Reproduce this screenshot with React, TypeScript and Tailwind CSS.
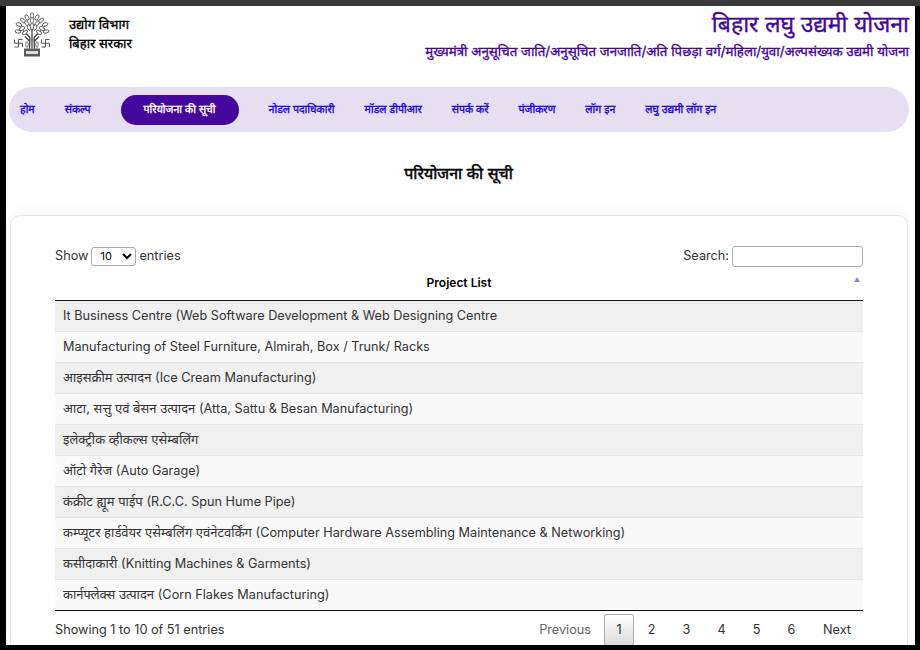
const font = "[font-family:Inter,'Noto_Sans','Noto_Sans_Devanagari',sans-serif]"
const heavy = "font-normal [-webkit-text-stroke:0.35px_currentColor]"

const navItems = [
  { label: "होम" },
  { label: "संकल्प" },
  { label: "परियोजना की सूची", active: true },
  { label: "नोडल पदाधिकारी" },
  { label: "मॉडल डीपीआर" },
  { label: "संपर्क करें" },
  { label: "पंजीकरण" },
  { label: "लॉग इन" },
  { label: "लघु उद्यमी लॉग इन" },
]

const projects = [
  { hi: "", en: "It Business Centre (Web Software Development & Web Designing Centre" },
  { hi: "", en: "Manufacturing of Steel Furniture, Almirah, Box / Trunk/ Racks" },
  { hi: "आइसक्रीम उत्पादन ", en: "(Ice Cream Manufacturing)" },
  { hi: "आटा, सत्तु एवं बेसन उत्पादन ", en: "(Atta, Sattu & Besan Manufacturing)" },
  { hi: "इलेक्ट्रीक व्हीकल्स एसेम्बलिंग", en: "" },
  { hi: "ऑटो गैरेज ", en: "(Auto Garage)" },
  { hi: "कंक्रीट ह्यूम पाईप ", en: "(R.C.C. Spun Hume Pipe)" },
  { hi: "कम्प्यूटर हार्डवेयर एसेम्बलिंग एवंनेटवर्किंग ", en: "(Computer Hardware Assembling Maintenance & Networking)" },
  { hi: "कसीदाकारी ", en: "(Knitting Machines & Garments)" },
  { hi: "कार्नफ्लेक्स उत्पादन ", en: "(Corn Flakes Manufacturing)" },
]

function Emblem() {
  const leaves = [
    [18, 3, 90], [13, 5, 60], [23, 5, 120], [9, 8, 40], [18, 8, 90], [27, 8, 140], [5, 12, 20], [13, 11, 50], [23, 11, 130], [31, 12, 160],
    [8, 16, 150], [15, 15, 70], [21, 15, 110], [28, 16, 30], [4, 19, 10], [11, 20, 140], [25, 20, 40], [32, 19, 170], [18, 14, 90],
  ]
  return (
    <svg viewBox="0 0 36 44" className="w-[36px] h-[45px] shrink-0">
      <path d="M18 36V10M15.500 36l.5-11-7-7M20.500 36l-.5-11 7-7M16 29l-5-5M20 29l5-5" stroke="#333" strokeWidth="1.200" fill="none" />
      {leaves.map(([x, y, r], i) => (
        <ellipse key={i} cx={x} cy={y} rx="3" ry="1.600" fill="#fff" stroke="#444" strokeWidth="0.800" transform={`rotate(${r} ${x} ${y})`} />
      ))}
      <ellipse cx="13" cy="32" rx="1.200" ry="3" fill="#fff" stroke="#444" strokeWidth="0.700" />
      <ellipse cx="23" cy="32" rx="1.200" ry="3" fill="#fff" stroke="#444" strokeWidth="0.700" />
      <g stroke="#555" strokeWidth="1" fill="none">
        <path d="M4.500 27v7.500M0.500 30.750h8M4.500 27h4M8.500 30.750v3.750M4.500 34.500h-4M0.500 30.750V27" />
        <path d="M31.500 27v7.500M27.500 30.750h8M31.500 27h4M35.500 30.750v3.750M31.500 34.500h-4M27.500 30.750V27" />
      </g>
      <rect x="10" y="36" width="16" height="8" fill="#5a5a5a" />
      <rect x="12" y="38.500" width="12" height="3" fill="#ddd" />
    </svg>
  )
}

export default function App() {
  return (
    <div className={`w-[920px] h-[650px] overflow-hidden bg-black flex flex-col ${font}`}>
      <div className="h-[6px] bg-[#3a3a3a] shrink-0" />
      <div className="flex-1 min-h-0 ml-[6px] mr-[5px] mb-[5px] bg-white overflow-hidden flex flex-col">
        <header className="h-[81px] shrink-0 flex justify-between pl-[8px] pr-[6px]">
          <div className="flex pt-[6px]">
            <Emblem />
            <div className={`ml-[19px] pt-[3px] text-[13px] leading-[19px] text-black ${heavy}`}>
              <div>उद्योग विभाग</div>
              <div>बिहार सरकार</div>
            </div>
          </div>
          <div className={`text-right text-[#44079c] pt-[1px] ${heavy}`}>
            <div className="text-[23px] leading-[35px]">बिहार लघु उद्यमी योजना</div>
            <div className="text-[13.300px] leading-[18px]">मुख्यमंत्री अनुसूचित जाति/अनुसूचित जनजाति/अति पिछड़ा वर्ग/महिला/युवा/अल्पसंख्यक उद्यमी योजना</div>
          </div>
        </header>

        <nav className="h-[45px] shrink-0 ml-[3px] mr-[6px] rounded-[23px] bg-[#e6dff1] flex items-center gap-[30px] pl-[11px]">
          {navItems.map((item) => (
            <div
              key={item.label}
              className={`shrink-0 text-[10.600px] whitespace-nowrap ${heavy} ${
                item.active
                  ? "h-[30px] px-[23px] rounded-[15px] bg-[#44079c] text-white flex items-center justify-center"
                  : "text-[#1a00e0]"
              }`}
            >
              {item.label}
            </div>
          ))}
        </nav>

        <div className="h-[83px] shrink-0 flex items-center justify-center pb-[2px] pr-[4px] text-[16px] text-black font-normal [-webkit-text-stroke:0.5px_currentColor]">
          परियोजना की सूची
        </div>

        <section className="flex-1 min-h-0 ml-[4px] mr-[7px] bg-white border border-[#e8e8e8] rounded-t-[10px] border-b-0 shadow-[0_-6px_14px_rgba(0,0,0,0.03)] pt-[29px] pl-[44px] pr-[44px] text-[#333] text-[13px]">
          <div className="flex justify-between h-[22px] text-[12.700px]">
            <div className="flex items-center gap-[3px]">
              <span>Show</span>
              <select className="w-[45px] h-[19px] border border-[#aaa] rounded-[3px] text-[11px] pl-[4px] bg-white text-black">
                <option>10</option>
              </select>
              <span>entries</span>
            </div>
            <div className="flex items-center gap-[3px]">
              <span>Search:</span>
              <input className="w-[131px] h-[21px] border border-[#aaa] rounded-[3px] bg-white" />
            </div>
          </div>

          <div className="h-[34px] relative flex items-center justify-center border-b border-[#111] font-semibold text-[12px] text-black pb-[2px]">
            Project List
            <span className="absolute right-[3px] top-[10px] w-0 h-0 border-x-[3.500px] border-x-transparent border-b-[5px] border-b-[#8888e8]" />
          </div>

          {projects.map((row, i) => (
            <div
              key={row.hi + row.en}
              className={`flex items-center px-[8px] whitespace-pre ${
                i === 0 ? "h-[30px]" : "h-[31px] border-t border-[#e4e4e4]"
              } ${i % 2 === 0 ? "bg-[#f0f0f0]" : "bg-[#f9f9f9]"}`}
            >
              {row.hi}
              <span className="text-[12.700px]">{row.en}</span>
            </div>
          ))}

          <div className="border-t border-[#111] flex justify-between text-[12.700px]">
            <div className="pt-[9px]">Showing 1 to 10 of 51 entries</div>
            <div className="flex items-start pt-[3px] text-[#333]">
              <span className="text-[#666] pt-[6px] mr-[13px]">Previous</span>
              <span className="w-[30px] h-[32px] border border-[#aaa] rounded-[2px] bg-gradient-to-b from-white to-[#dcdcdc] flex items-center justify-center">1</span>
              <span className="w-[35px] text-center pt-[6px]">2</span>
              <span className="w-[35px] text-center pt-[6px]">3</span>
              <span className="w-[35px] text-center pt-[6px]">4</span>
              <span className="w-[35px] text-center pt-[6px]">5</span>
              <span className="w-[35px] text-center pt-[6px]">6</span>
              <span className="pt-[6px] ml-[14px] mr-[12px]">Next</span>
            </div>
          </div>
        </section>
      </div>
    </div>
  )
}
